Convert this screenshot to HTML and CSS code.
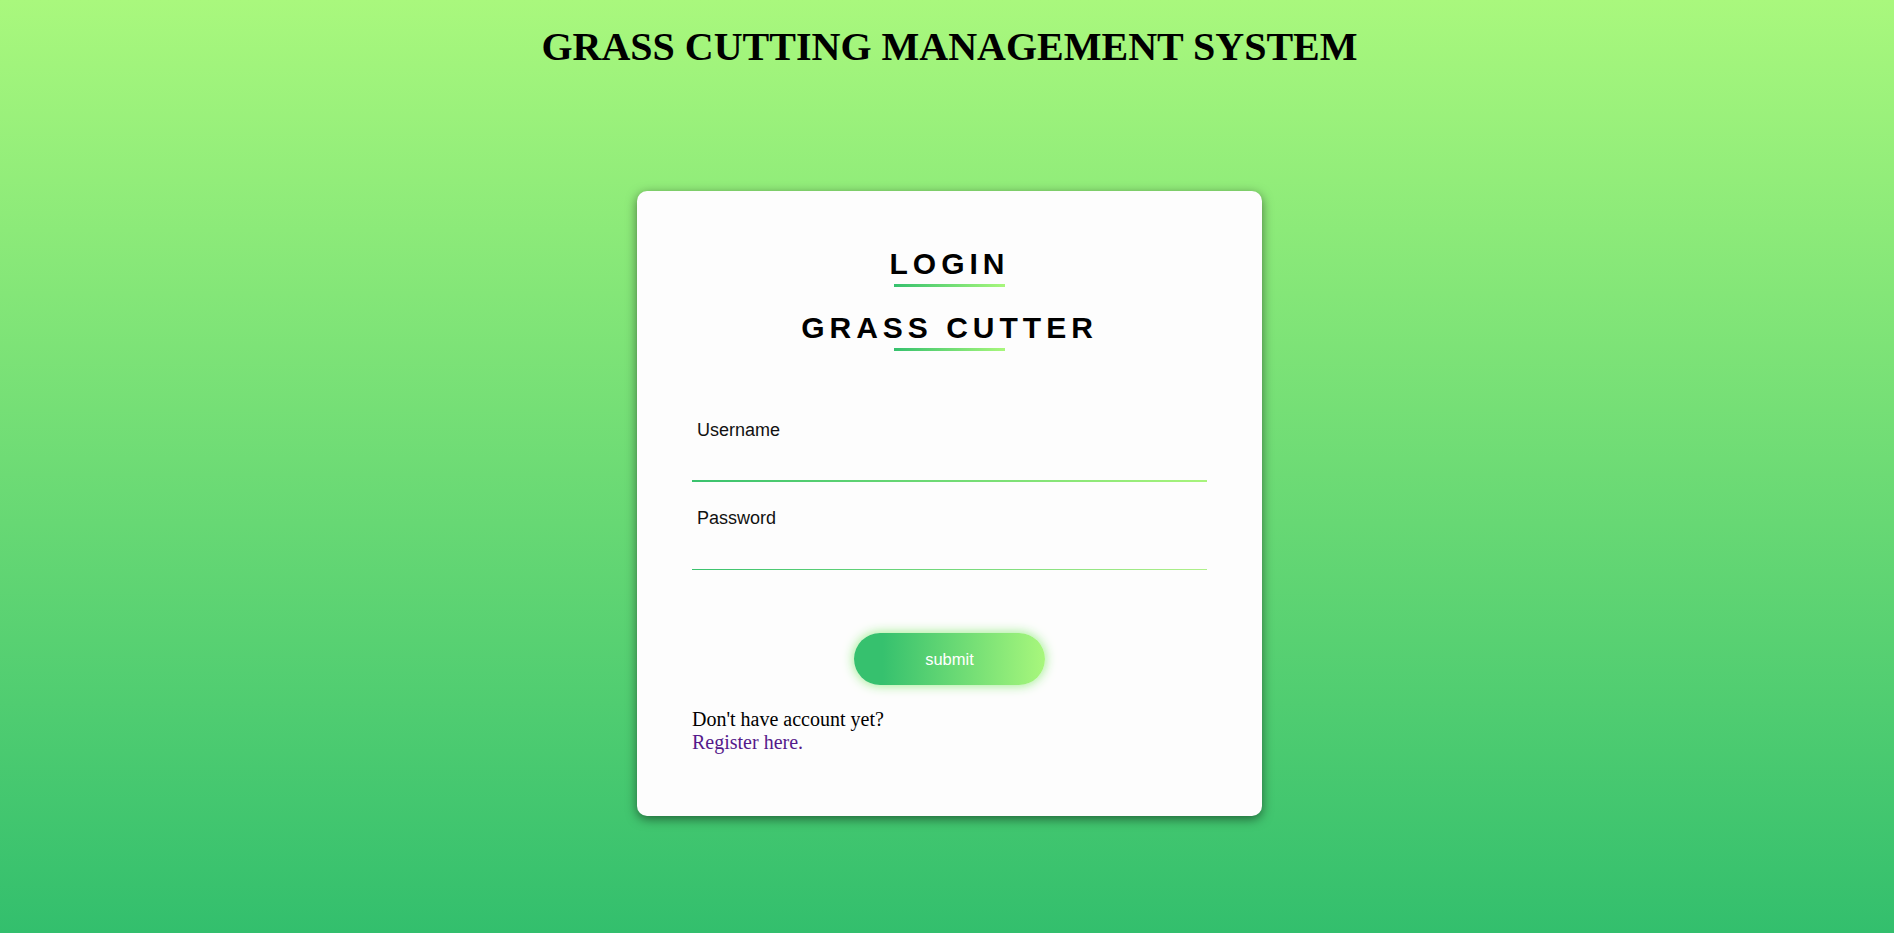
FILE: index.html
```html
<!DOCTYPE html>
<html lang="en">
<head>
<meta charset="utf-8">
<title>Grass Cutting Management System</title>
<link rel="stylesheet" href="styles.css">
</head>
<body>
<div class="page">
  <h1 class="site-title">GRASS CUTTING MANAGEMENT SYSTEM</h1>
  <div class="card">
    <h2 class="card-heading">LOGIN</h2>
    <div class="heading-line"></div>
    <h2 class="card-heading card-heading--second">GRASS CUTTER</h2>
    <div class="heading-line"></div>
    <form class="login-form" onsubmit="return false;">
      <div class="field">
        <label class="field-label" for="username">Username</label>
        <input class="field-input" id="username" type="text">
      </div>
      <div class="field field--second">
        <label class="field-label" for="password">Password</label>
        <input class="field-input field-input--thin" id="password" type="password">
      </div>
      <button class="submit-btn" type="submit">submit</button>
    </form>
    <p class="register-text">Don't have account yet?<br><a class="register-link" href="#">Register here.</a></p>
  </div>
</div>
</body>
</html>
```

FILE: styles.css
```css
html, body {
  margin: 0;
  padding: 0;
  min-height: 100%;
}
body {
  min-height: 100vh;
  background: linear-gradient(to bottom, #a9f87d 0%, #33bf6d 100%);
  background-attachment: fixed;
  font-family: "Liberation Serif", "Times New Roman", serif;
}
.page {
  padding-left: 5px;
  display: flex;
  flex-direction: column;
  align-items: center;
}
.site-title {
  margin: 0;
  padding-top: 25px;
  font-family: "Liberation Serif", "Times New Roman", serif;
  font-size: 40px;
  line-height: 44px;
  font-weight: bold;
  color: #000;
  text-align: center;
}
.card {
  box-sizing: border-box;
  width: 625px;
  margin-top: 122px;
  padding: 55px 55px 55px;
  background: #fdfdfd;
  border-radius: 10px;
  box-shadow: 0 3px 11px rgba(0, 0, 0, 0.5);
}
.card-heading {
  margin: 0;
  font-family: "Liberation Sans", Arial, sans-serif;
  font-size: 30px;
  line-height: 35px;
  font-weight: bold;
  letter-spacing: 5px;
  color: #000;
  text-align: center;
}
.card-heading--second {
  margin-top: 23px;
}
.heading-line {
  width: 111px;
  height: 3px;
  margin: 3px auto 0;
  background: linear-gradient(to right, #36c16e, #a8f77c);
}
.login-form {
  margin-top: 68.5px;
  display: flex;
  flex-direction: column;
}
.field {
  display: flex;
  flex-direction: column;
}
.field--second {
  margin-top: 26px;
}
.field-label {
  font-family: "Liberation Sans", Arial, sans-serif;
  font-size: 18px;
  line-height: 21px;
  color: #111;
  padding-left: 5px;
}
.field-input {
  box-sizing: border-box;
  display: block;
  width: 100%;
  height: 41px;
  border: 0;
  outline: none;
  padding: 0 5px;
  font-family: "Liberation Sans", Arial, sans-serif;
  font-size: 18px;
  background: linear-gradient(to right, #3ac26e, #a8f47c) left bottom / 100% 2px no-repeat;
}
.field-input--thin {
  background: linear-gradient(to right, #3ac26e, #b0f08a) left bottom / 100% 1px no-repeat;
}
.submit-btn {
  align-self: center;
  width: 191px;
  height: 52px;
  margin-top: 63px;
  border: 0;
  border-radius: 26px;
  background: linear-gradient(to right, #36c16e 15%, #a8f77c 100%);
  box-shadow: 0 0 12px rgba(140, 235, 120, 0.95);
  color: #fff;
  font-family: "Liberation Sans", Arial, sans-serif;
  font-size: 16.5px;
  line-height: 52px;
  padding: 0;
  cursor: pointer;
}
.register-text {
  margin: 23px 0 7px;
  font-family: "Liberation Serif", "Times New Roman", serif;
  font-size: 20px;
  line-height: 23px;
  color: #000;
}
.register-link {
  color: #551a8b;
  text-decoration: none;
}
```
